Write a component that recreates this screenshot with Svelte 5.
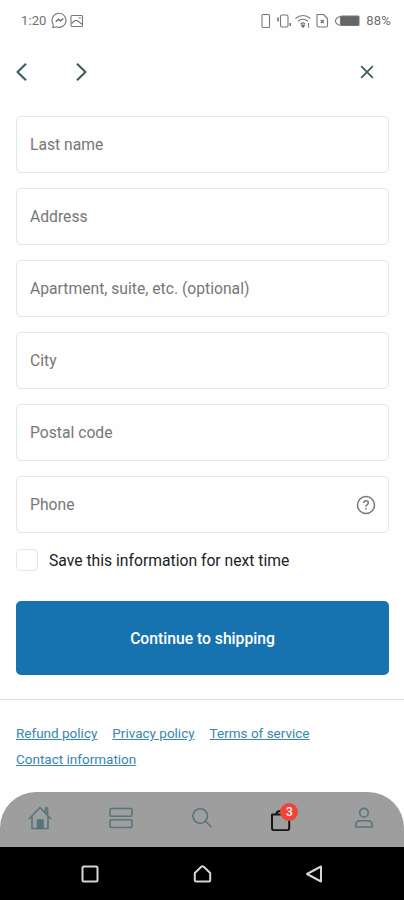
<script>
    const fields = [
        { id: 'lastName', label: 'Last name' },
        { id: 'address', label: 'Address' },
        { id: 'apartment', label: 'Apartment, suite, etc. (optional)' },
        { id: 'city', label: 'City' },
        { id: 'postalCode', label: 'Postal code' },
        { id: 'phone', label: 'Phone', help: true }
    ];

    const row1 = ['Refund policy', 'Privacy policy', 'Terms of service'];
    const row2 = ['Contact information'];

    let cartCount = 3;
    let save = false;
</script>

<div class="screen">
    <div class="statusBar">
        <span class="time">1:20</span>
        <svg class="messenger" width="17" height="17" viewBox="0 0 17 17">
            <path d="M2.2 12.2A7 7 0 1 1 5.4 14.8L1.8 15.6Z" />
            <path d="M4.8 9.8L7.4 7.2L9.4 9L12.2 6.6" stroke-width="1.6" />
        </svg>
        <svg class="photo" width="14" height="14" viewBox="0 0 14 14">
            <rect x="1" y="1.5" width="11.5" height="11" rx="1" />
            <path d="M1.5 9.5L5 6.5L7 6.5L12.5 10.5M8.5 4H11" />
        </svg>
        <svg class="system" width="101" height="18" viewBox="0 0 101 18">
            <rect x="1" y="2.5" width="7.5" height="13" rx="1" />
            <path d="M19.5 11V4.5Q19.5 3 21 3H25.5Q27 3 27 4.5V11M19.5 9V13.5Q19.5 15 21 15H25.5Q27 15 27 13.5V9" />
            <path d="M17 5.5V9.5M29.3 11V14" stroke-width="1.6" />
            <path d="M34.5 6.5Q42 0.5 49.5 6.5M37 9.3Q42 5.3 47 9.3M39.5 11.8Q42 10 44 11.8M47.5 11V15.5" />
            <path class="solid" d="M40.2 13L42 15.5L43.8 13Z" />
            <path d="M56 2.5H62.5L66.5 6.5V13.5Q66.5 15 65 15H57.5Q56 15 56 13.5Z" />
            <path d="M59.8 8L62.8 11M62.8 8L59.8 11" stroke-width="1.5" />
            <path d="M79 4.5Q74.5 6 74.5 9Q74.5 12 79 13.5" />
            <rect class="solid" x="79.5" y="4" width="18.5" height="9.5" rx="1" />
        </svg>
        <span class="battery">88%</span>
    </div>

    <header class="toolbar">
        <button class="iconButton" aria-label="Back">
            <svg width="14" height="20" viewBox="0 0 14 20"><path d="M11 1.8L2.5 10L11 18.2" /></svg>
        </button>
        <button class="iconButton forward" aria-label="Forward">
            <svg width="14" height="20" viewBox="0 0 14 20"><path d="M2 1.8L10.5 10L2 18.2" /></svg>
        </button>
        <button class="iconButton close" aria-label="Close">
            <svg width="14" height="14" viewBox="0 0 14 14"><path d="M1.2 1.2L12.8 12.8M12.8 1.2L1.2 12.8" stroke-width="1.7" /></svg>
        </button>
    </header>

    <main>
        {#each fields as field}
            <div class="field">
                <input id={field.id} placeholder={field.label} aria-label={field.label} />
                {#if field.help}
                    <svg width="20" height="20" viewBox="0 0 20 20">
                        <circle cx="10" cy="10" r="8.5" />
                        <path d="M7.7 8Q7.8 5.8 10 5.8Q12.3 5.8 12.3 7.8Q12.3 9 11 9.8Q10 10.4 10 11.7M10 13V14.5" />
                    </svg>
                {/if}
            </div>
        {/each}

        <label class="save">
            <input type="checkbox" bind:checked={save} />
            <span>Save this information for next time</span>
        </label>

        <button class="submit">Continue to shipping</button>
    </main>

    <footer>
        {#each [row1, row2] as row}
            <div class="links">
                {#each row as link}
                    <a href="#policy">{link}</a>
                {/each}
            </div>
        {/each}
    </footer>

    <nav class="tabs">
        <div class="tab">
            <svg width="26" height="26" viewBox="0 0 26 26">
                <path d="M2 14L13 2.5L24 14M5 11.5V23.5H21V11.5M18.5 8V3H20.5V10" />
                <rect class="door" x="10.5" y="15" width="5.5" height="8.5" />
            </svg>
        </div>
        <div class="tab">
            <svg width="26" height="26" viewBox="0 0 26 26">
                <rect x="2" y="3.5" width="22" height="7.8" rx="1.5" />
                <rect x="2" y="14.7" width="22" height="7.8" rx="1.5" />
            </svg>
        </div>
        <div class="tab">
            <svg width="26" height="26" viewBox="0 0 26 26">
                <circle cx="11.2" cy="11" r="7.3" />
                <path d="M16.5 16.3L22.5 22.2" />
            </svg>
        </div>
        <div class="tab active">
            <svg width="26" height="26" viewBox="0 0 26 26">
                <path d="M2 9.5H19.2V23Q19.2 25.2 17 25.2H4.2Q2 25.2 2 23ZM6 9.5Q6.5 6 10.5 6Q14.5 6 15 9.5" />
            </svg>
            <span class="badge">{cartCount}</span>
        </div>
        <div class="tab">
            <svg width="26" height="26" viewBox="0 0 26 26">
                <circle cx="13" cy="7.7" r="4.3" />
                <path d="M4.7 22V20.5Q4.7 15.8 9.5 15.8H16.5Q21.3 15.8 21.3 20.5V22Z" />
            </svg>
        </div>
    </nav>

    <div class="androidBar">
        <svg width="20" height="20" viewBox="0 0 20 20"><rect x="2.5" y="2.5" width="15" height="15" rx="1.5" /></svg>
        <svg width="20" height="20" viewBox="0 0 20 20"><path d="M2.8 9L9.3 2.8Q10.5 1.8 11.7 2.8L18.2 9V16Q18.2 17.5 16.7 17.5H4.3Q2.8 17.5 2.8 16Z" /></svg>
        <svg width="20" height="20" viewBox="0 0 20 20"><path d="M17 2.5V17.5L3 10Z" /></svg>
    </div>
</div>

<style>
    :global(body) {
        margin: 0;
        background: #fefefe;
    }
    .screen {
        display: flex;
        flex-direction: column;
        width: 404px;
        height: 900px;
        overflow: hidden;
        background: #fefefe;
        font-family: Roboto, "Liberation Sans", sans-serif;
    }
    svg {
        display: block;
        flex: none;
        fill: none;
        stroke-linejoin: round;
    }
    button {
        border: none;
        padding: 0;
        font-family: inherit;
    }
    .statusBar {
        display: flex;
        align-items: center;
        box-sizing: border-box;
        height: 41px;
        padding: 0 13px 0 21px;
        color: #707070;
        font-size: 13px;
    }
    .statusBar svg {
        stroke: #777;
        stroke-width: 1.1;
    }
    .statusBar .solid {
        fill: #666;
    }
    .time {
        width: 30px;
        letter-spacing: 0.1px;
    }
    .photo {
        margin-left: 2px;
    }
    .system {
        margin-left: auto;
    }
    .battery {
        margin-left: 4px;
        letter-spacing: 0.2px;
    }
    .toolbar {
        display: flex;
        align-items: center;
        height: 62px;
        padding: 0 30px 0 15px;
    }
    .iconButton {
        background: none;
        stroke: #3d5a5c;
        stroke-width: 2.1;
    }
    .forward {
        margin-left: 46px;
    }
    .close {
        margin-left: auto;
    }
    main {
        display: flex;
        flex-direction: column;
        padding: 13px 15px 24px 16px;
    }
    .field {
        display: flex;
        align-items: center;
        box-sizing: border-box;
        height: 57px;
        margin-bottom: 15px;
        padding: 0 13px 0 13px;
        border: 1.5px solid #e6e6e6;
        border-radius: 5px;
    }
    .field input {
        flex: 1;
        min-width: 0;
        padding: 0 0 1px;
        border: none;
        outline: none;
        background: none;
        color: #333;
        font: 15.7px Roboto, sans-serif;
    }
    .field input::placeholder {
        color: #777;
        opacity: 1;
    }
    .field svg {
        stroke: #777;
        stroke-width: 1.5;
        margin-right: -1px;
    }
    .save {
        display: flex;
        align-items: center;
        height: 22px;
        margin-top: 1px;
        color: #222;
        font-size: 15.7px;
    }
    .save input {
        appearance: none;
        box-sizing: border-box;
        width: 22px;
        height: 22px;
        margin: 0 11px 0 0;
        border: 1.5px solid #e6e6e6;
        border-radius: 4px;
    }
    .submit {
        height: 74px;
        margin-top: 30px;
        border-radius: 5px;
        background: #1773b0;
        color: #fff;
        font-size: 15.7px;
        font-weight: 500;
    }
    footer {
        flex: 1;
        padding: 20px 16px 0;
        border-top: 1px solid #dedede;
    }
    .links {
        display: flex;
        gap: 15px;
        height: 26px;
        line-height: 26px;
        font-size: 13.5px;
    }
    .links a {
        color: #3986b0;
        text-decoration: underline;
    }
    .tabs {
        display: flex;
        align-items: center;
        box-sizing: border-box;
        height: 55px;
        padding-bottom: 3px;
        border-radius: 36px 36px 0 0;
        background: #9e9e9e;
    }
    .tab {
        position: relative;
        display: flex;
        flex: 1;
        justify-content: center;
        stroke: #56757a;
        stroke-width: 1.6;
    }
    .tab .door {
        fill: #56757a;
    }
    .active {
        stroke: #161616;
        stroke-width: 2;
    }
    .badge {
        position: absolute;
        top: -2px;
        left: 38px;
        width: 18px;
        height: 18px;
        border-radius: 50%;
        background: #f04438;
        color: #fff;
        font-size: 12px;
        font-weight: 500;
        line-height: 18px;
        text-align: center;
    }
    .androidBar {
        display: flex;
        align-items: center;
        justify-content: space-between;
        height: 53px;
        padding: 0 80px;
        background: #000;
        stroke: #d6d6d6;
        stroke-width: 2;
    }
</style>
